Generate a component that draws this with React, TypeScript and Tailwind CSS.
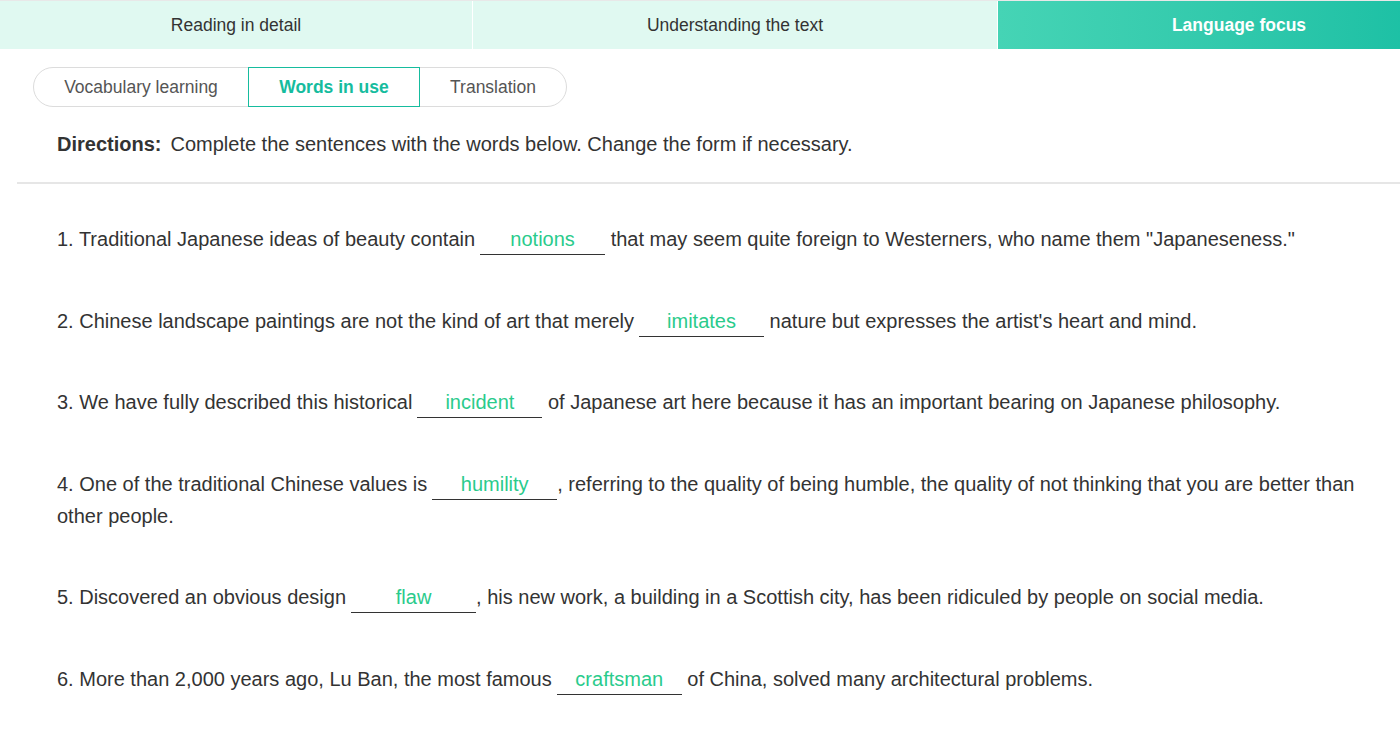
import React from 'react';

type Part = string | { answer: string };

const items: Part[][] = [
  ['1. Traditional Japanese ideas of beauty contain', { answer: 'notions' }, ' that may seem quite foreign to Westerners, who name them "Japaneseness."'],
  ['2. Chinese landscape paintings are not the kind of art that merely', { answer: 'imitates' }, " nature but expresses the artist's heart and mind."],
  ['3. We have fully described this historical', { answer: 'incident' }, ' of Japanese art here because it has an important bearing on Japanese philosophy.'],
  ['4. One of the traditional Chinese values is', { answer: 'humility' }, ', referring to the quality of being humble, the quality of not thinking that you are better than other people.'],
  ['5. Discovered an obvious design', { answer: 'flaw' }, ', his new work, a building in a Scottish city, has been ridiculed by people on social media.'],
  ['6. More than 2,000 years ago, Lu Ban, the most famous', { answer: 'craftsman' }, ' of China, solved many architectural problems.'],
];

const Blank: React.FC<{ word: string }> = ({ word }) => (
  <span className="inline-block w-[125px] ml-[5px] border-b border-[#333] text-center text-[#2acb8c] leading-[30px] align-baseline">
    {word}
  </span>
);

export default function App() {
  return (
    <div className="w-[1400px] h-[744px] overflow-hidden bg-white text-[#333]" style={{ fontFamily: '"Liberation Sans", Arial, sans-serif' }}>
      {/* main tabs */}
      <div className="flex h-[49px] border-t border-[#e8e8e8] w-[1480px]">
        <div className="w-[472px] bg-[#e0f9f1] flex items-center justify-center text-[17.5px] text-[#333]">
          Reading in detail
        </div>
        <div className="w-[524px] ml-px bg-[#e0f9f1] flex items-center justify-center text-[17.5px] text-[#333]">
          Understanding the text
        </div>
        <div className="w-[482px] ml-px bg-gradient-to-r from-[#45d4b5] to-[#0fbda2] flex items-center justify-center text-[17.5px] font-bold text-white">
          Language focus
        </div>
      </div>

      {/* sub tabs */}
      <div className="pl-[33px] pt-[18px]">
        <div className="inline-flex h-[40px] rounded-full border border-[#dcdcdc] text-[17.5px] text-[#555]">
          <div className="w-[214px] flex items-center justify-center">Vocabulary learning</div>
          <div className="w-[172px] -my-px flex items-center justify-center border border-[#16bc9e] text-[#16bc9e] font-bold">
            Words in use
          </div>
          <div className="w-[146px] flex items-center justify-center">Translation</div>
        </div>
      </div>

      {/* directions */}
      <div className="pl-[57px] pt-[24px] text-[20px] leading-[26px] text-[#333]">
        <span className="font-bold mr-[9px]">Directions:</span>
        Complete the sentences with the words below. Change the form if necessary.
      </div>

      <div className="ml-[17px] mt-[25px] h-[2px] bg-[#e6e6e6]" />

      {/* sentences */}
      <div className="pl-[57px] pr-[36px] pt-[39px] flex flex-col gap-[49.5px] text-[20px] leading-[32px] text-[#333]">
        {items.map((parts, i) => (
          <p key={i}>
            {parts.map((p, j) =>
              typeof p === 'string' ? (
                <React.Fragment key={j}>{p}</React.Fragment>
              ) : (
                <Blank key={j} word={p.answer} />
              )
            )}
          </p>
        ))}
      </div>
    </div>
  );
}
